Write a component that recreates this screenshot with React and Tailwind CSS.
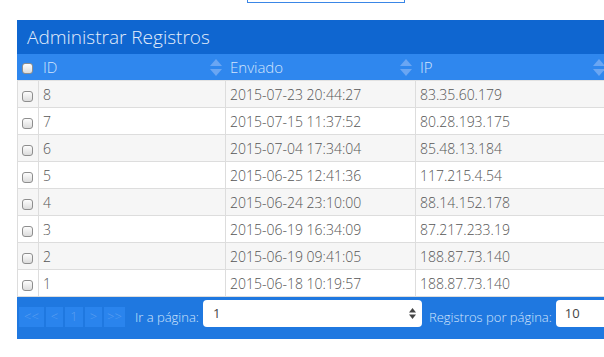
import React from "react";

const rows = [
  ["8", "2015-07-23 20:44:27", "83.35.60.179"],
  ["7", "2015-07-15 11:37:52", "80.28.193.175"],
  ["6", "2015-07-04 17:34:04", "85.48.13.184"],
  ["5", "2015-06-25 12:41:36", "117.215.4.54"],
  ["4", "2015-06-24 23:10:00", "88.14.152.178"],
  ["3", "2015-06-19 16:34:09", "87.217.233.19"],
  ["2", "2015-06-19 09:41:05", "188.87.73.140"],
  ["1", "2015-06-18 10:19:57", "188.87.73.140"],
];

function Check() {
  return (
    <span className="block w-[11px] h-[11px] rounded-[3px] border border-[#8e8e8e] bg-gradient-to-b from-[#fdfdfd] to-[#dcdcdc]" />
  );
}

function SortIcon() {
  return (
    <svg width="12" height="17" viewBox="0 0 12 17" className="shrink-0">
      <path d="M6 0 L12 7 L0 7 Z" fill="#6aa6f3" />
      <path d="M0 10 L12 10 L6 17 Z" fill="#6aa6f3" />
    </svg>
  );
}

export default function App() {
  return (
    <div
      className="w-[604px] h-[357px] overflow-hidden bg-white"
      style={{ fontFamily: '"Open Sans", sans-serif' }}
    >
      <div className="ml-[247px] w-[158px] h-[3px] border border-t-0 border-[#3a86e6]" />
      <div className="ml-[17px] mt-[17px] w-[600px]">
        <div className="h-[34px] bg-[#0f66d0] pl-[10px] flex items-center text-[19px] font-light text-[#e3edfb] leading-none">
          Administrar Registros
        </div>
        <div className="grid grid-cols-[21px_187px_190px_202px] h-[27px] bg-[#2f87ee] border-b border-[#e2e2e2] text-[15px] font-light text-[#d2e4fc]">
          <div className="flex items-center pl-[5px] pt-[3px]">
            <Check />
          </div>
          <div className="flex items-center justify-between pl-[5px] pr-[3px]">
            <span>ID</span>
            <SortIcon />
          </div>
          <div className="flex items-center justify-between pl-[5px] pr-[3px]">
            <span>Enviado</span>
            <SortIcon />
          </div>
          <div className="flex items-center justify-between pl-[5px] pr-[12px]">
            <span>IP</span>
            <SortIcon />
          </div>
        </div>
        {rows.map((r, i) => (
          <div
            key={r[0]}
            className={
              "grid grid-cols-[21px_187px_190px_202px] h-[27px] border-b border-l border-[#dddddd] text-[14px] font-light text-[#555] " +
              (i % 2 === 0 ? "bg-[#f6f6f6]" : "bg-white")
            }
          >
            <div className="flex items-center pl-[4px] pt-[5px] border-r border-[#dddddd]">
              <Check />
            </div>
            <div className="flex items-center pl-[4px] border-r border-[#dddddd]">{r[0]}</div>
            <div className="flex items-center pl-[4px] border-r border-[#dddddd]">{r[1]}</div>
            <div className="flex items-center pl-[4px]">{r[2]}</div>
          </div>
        ))}
        <div className="h-[42px] bg-[#1f78e0] flex items-end pb-[12px] pl-[2px] text-[13px] font-light text-[#d2e4fc] whitespace-nowrap">
          <div className="flex shrink-0 gap-[2px] text-[13px] text-[#5b9ef0]">
            <span className="w-[25px] h-[20px] bg-[#2a84ed] flex items-center justify-center">&lt;&lt;</span>
            <span className="w-[17px] h-[20px] bg-[#2a84ed] flex items-center justify-center">&lt;</span>
            <span className="w-[18px] h-[20px] bg-[#2a84ed] flex items-center justify-center">1</span>
            <span className="w-[17px] h-[20px] bg-[#2a84ed] flex items-center justify-center">&gt;</span>
            <span className="w-[21px] h-[20px] bg-[#2a84ed] flex items-center justify-center">&gt;&gt;</span>
          </div>
          <span className="shrink-0 ml-[10px] leading-[20px]">Ir a página:</span>
          <div className="shrink-0 ml-[4px] w-[219px] h-[27px] bg-white rounded-[4px] flex items-center justify-between pl-[10px] pr-[6px] text-[#444] font-normal text-[13px]">
            <span>1</span>
            <svg width="7" height="11" viewBox="0 0 7 11">
              <path d="M3.5 0 L7 4.5 L0 4.5 Z" fill="#444" />
              <path d="M0 6.5 L7 6.5 L3.5 11 Z" fill="#444" />
            </svg>
          </div>
          <span className="shrink-0 ml-[7px] leading-[20px]">Registros por página:</span>
          <div className="shrink-0 ml-[4px] w-[80px] h-[27px] bg-white rounded-[4px] flex items-center pl-[9px] text-[#444] font-normal text-[13px]">
            <span>10</span>
          </div>
        </div>
      </div>
    </div>
  );
}
